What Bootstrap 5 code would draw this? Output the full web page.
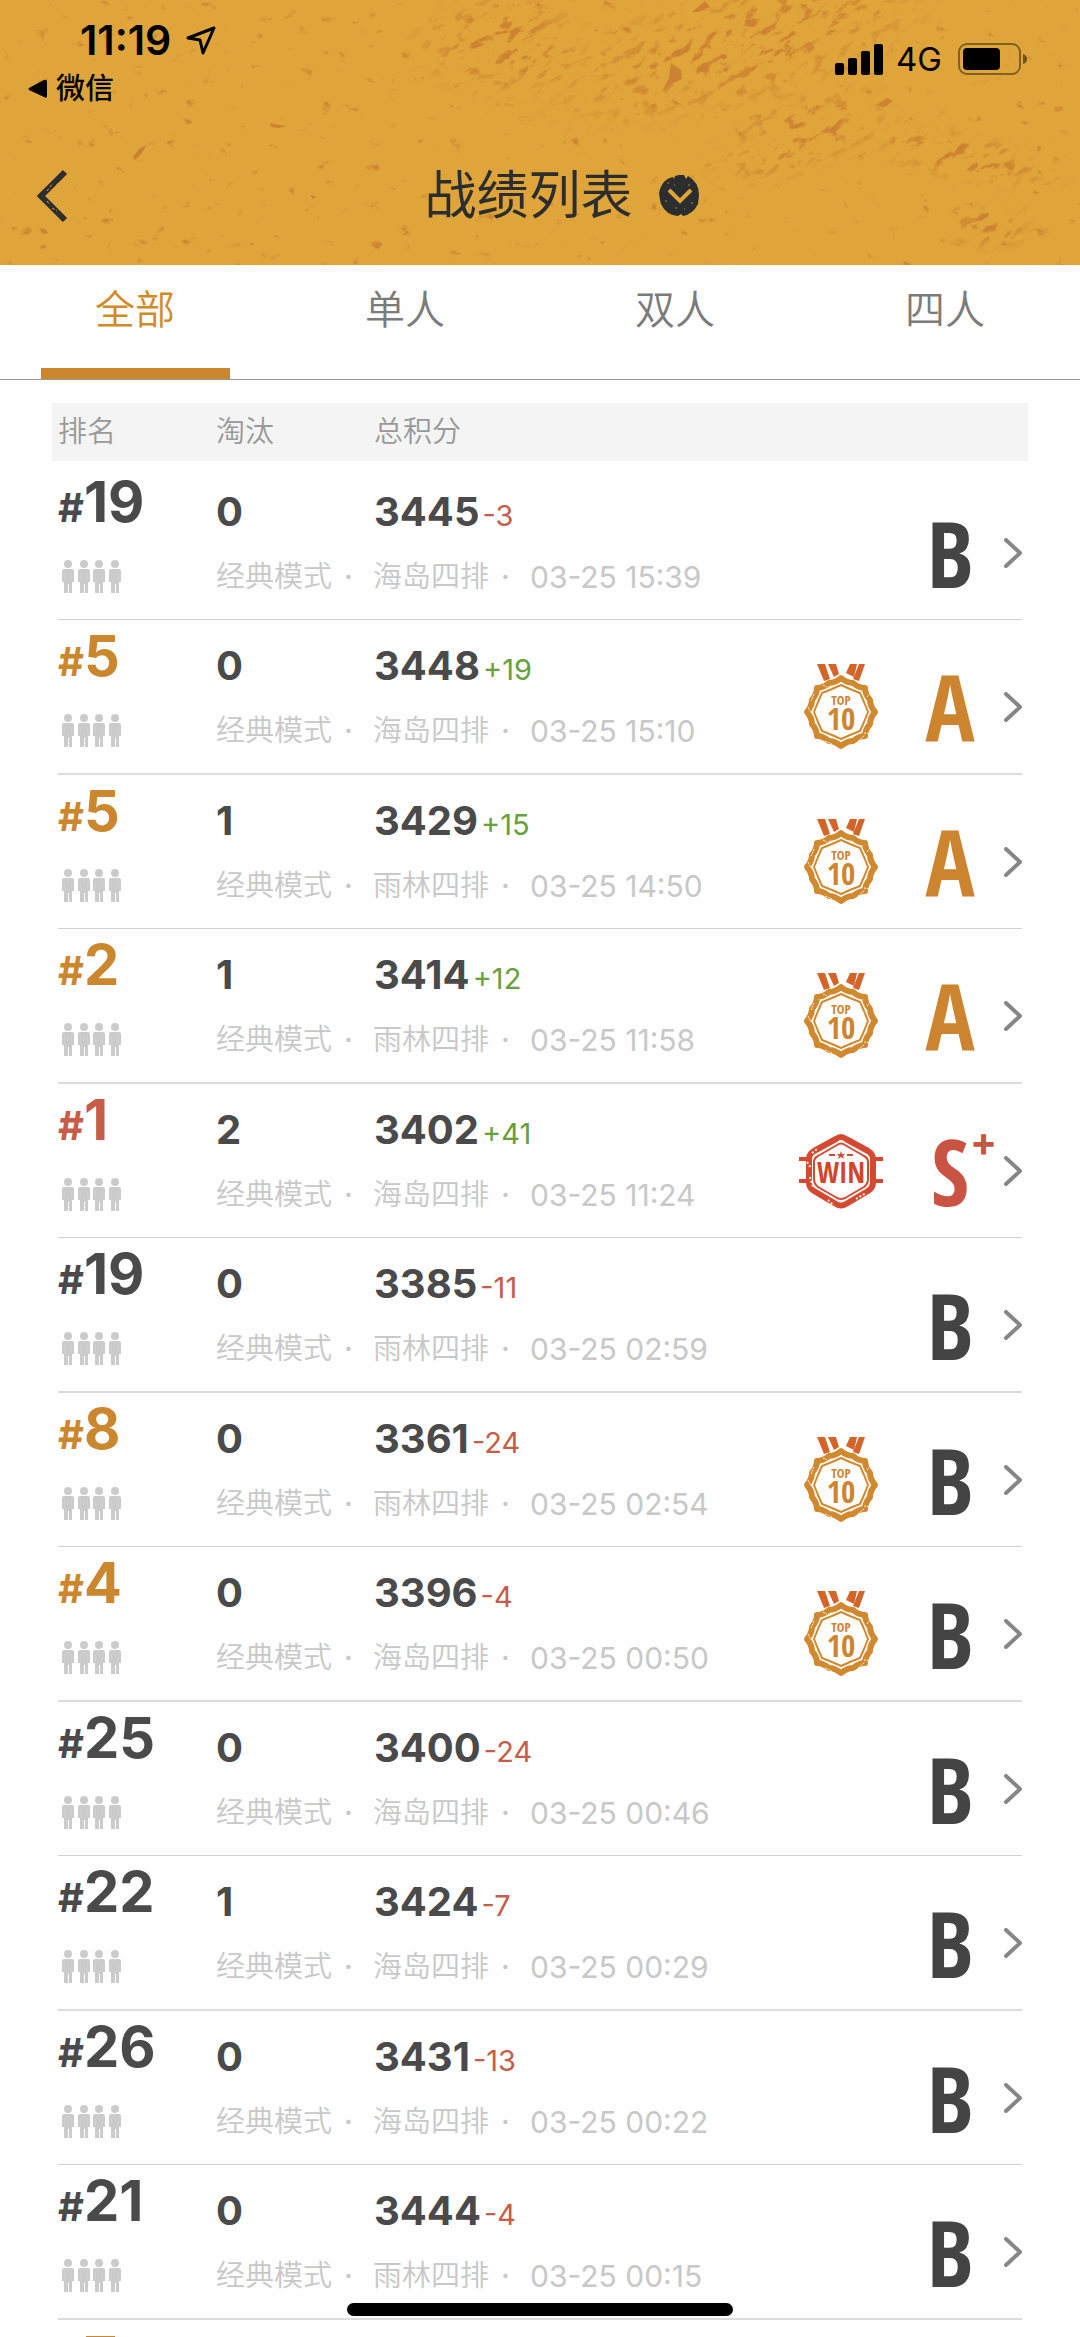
<!DOCTYPE html>
<html lang="zh-CN">
<head>
<meta charset="utf-8">
<meta name="viewport" content="width=device-width, initial-scale=1">
<title>战绩列表</title>
<link href="https://cdn.jsdelivr.net/npm/bootstrap@5.3.0/dist/css/bootstrap.min.css" rel="stylesheet">
<style>
  :root { --gold: #cb872d; --ink: #4a4a4a; --brick: #c65c49; --leaf: #67a03c; --faint: #c8c8c8; --stamp: "Noto Sans ExtraCondensed", "Open Sans Condensed", "Roboto Condensed", "Liberation Sans Narrow", sans-serif; }
  body { font-family: Inter, "Noto Sans CJK SC", sans-serif; color: var(--ink); background: #fefefe; }
  .phone { height: 100vh; }
  .masthead { background: #dfa53b; color: #000; height: 265px; }
  .texture { position: absolute; inset: 0; width: 100%; height: 100%; }
  .status { height: 112px; padding: 16px 52px 0 28px; }
  .clock { font-size: 41px; line-height: 48px; font-weight: 600; padding-left: 52px; }
  .back-app { font-size: 29px; line-height: 50px; font-weight: 500; color: #000; }
  .net { font-size: 33px; line-height: 40px; }
  .signals { padding-top: 23px; }
  .titlebar { height: 153px; padding: 14px 46px 0 0; color: #2b2d2e; }
  .back-btn { width: 92px; height: 92px; padding: 0 0 0 14px; }
  .page-title { font-size: 52px; line-height: 60px; font-weight: 400; }
  .tabs { height: 115px; border-bottom: 1px solid #999; }
  .tabs .nav-link { height: 114px; padding: 21px 0 0; font-size: 40px; line-height: 48px; font-weight: 350; color: #7b7b7b; position: relative; }
  .tabs .nav-link.active { color: #d18a25; }
  .tabs .nav-link.active::after { content: ""; position: absolute; left: 15%; right: 15%; bottom: 0; height: 11px; background: var(--gold); }
  .records { padding: 23px 58px 0; }
  .score-table { table-layout: fixed; border-collapse: separate; border-spacing: 0; color: inherit; }
  .score-table th, .score-table td { padding: 0; vertical-align: top; }
  .score-table th { background: #f4f4f4; height: 58px; font-size: 29px; line-height: 58px; font-weight: 350; color: #999; }
  .score-table th:first-child { box-shadow: -6px 0 #f4f4f4; }
  .score-table th:last-child { box-shadow: 6px 0 #f4f4f4; }
  .col-side { width: 158px; }
  .col-badges { width: 226px; }
  .score-table .top-line > td { height: 84px; }
  .score-table .sub-line > td { height: 70px; }
  .score-table tbody:nth-of-type(even) .sub-line > td { height: 71px; }
  .score-table tbody:nth-of-type(1) .top-line > td { border-top: 5px solid transparent; height: 89px; }
  .score-table .sub-line > td, .score-table .badge-cell { border-bottom: 1px solid #d2d2d2; }
  .score-table tbody:nth-of-type(even) .sub-line > td, .score-table tbody:nth-of-type(even) .badge-cell { border-bottom: 2px solid #dcdcdc; }
  .score-table .rank { padding-top: 4px; font-size: 56px; line-height: 64px; font-weight: 700; white-space: nowrap; }
  .rank .hash { font-size: 40px; }
  .rank.top10 { color: var(--gold); }
  .rank.first { color: var(--brick); }
  .score-table .figure-cell { padding-top: 22px; font-size: 40px; line-height: 48px; font-weight: 700; white-space: nowrap; }
  .delta { font-size: 29px; font-weight: 400; margin-left: 3px; }
  .delta.up { color: var(--leaf); }
  .delta.down { color: var(--brick); }
  .score-table .squad { padding: 10px 0 0 3px; }
  .score-table .meta { padding-top: 7px; font-size: 29px; line-height: 40px; font-weight: 350; color: var(--faint); white-space: nowrap; }
  .meta time { font-size: 30px; font-weight: 400; }
  .dot { width: 41px; padding-left: 12px; font-weight: 500; }
  .badge-row { height: 153px; padding-top: 20px; }
  .medal-slot { width: 86px; height: 88px; margin-right: 36px; }
  .grade { width: 60px; margin-right: 24px; text-align: center; position: relative; font-family: var(--stamp); font-weight: 800; font-size: 92px; line-height: 84px; color: #444; }
  .grade.a { color: #cc842f; }
  .grade.s { color: #c95443; }
  .grade .plus { position: absolute; left: 50px; top: -5px; font: 700 40px/36px Inter, sans-serif; }
  .stamp-text { font-family: var(--stamp); font-weight: 800; text-anchor: middle; }
  .home-bar { position: absolute; left: 50%; bottom: 21px; width: 386px; height: 13px; margin-left: -193px; border-radius: 7px; background: #000; }
</style>
</head>
<body>
<svg class="d-none" xmlns="http://www.w3.org/2000/svg">
  <symbol id="squad" viewBox="0 0 61 33">
    <g id="man" fill="#cbcbcb"><circle cx="7" cy="4" r="4"/><path d="M3 9H11Q13 9 13 11V22H11V13H10V33H8V23H6V33H4V13H3V22H1V11Q1 9 3 9Z"/><path d="M3 10H11V24H3Z" fill-opacity=".9"/><path d="M3 20H7V33H3ZM8 20H11V33H8Z"/></g>
    <use href="#man" x="16"/><use href="#man" x="31"/><use href="#man" x="47"/>
  </symbol>
  <symbol id="chev" viewBox="0 0 18 30"><path d="M2 2L16 15L2 28" fill="none" stroke="#868686" stroke-width="4" stroke-linecap="round" stroke-linejoin="round"/></symbol>
  <symbol id="top10" viewBox="0 0 86 88">
    <g fill="#d4652a"><path d="M19 1H27L32 16L26 18Z"/><path d="M30 1H38L41 11L36 14Z"/><path d="M48 10L52 1H59L56 14Z"/><path d="M61 1H67L61 18L55 16Z"/></g>
    <path d="M43 15Q49 20 55 20Q61 25 67 25Q67 31 72 37Q72 43 77 49Q72 55 72 61Q67 67 67 73Q61 73 55 78Q49 78 43 83Q37 78 31 78Q25 73 19 73Q19 67 14 61Q14 55 9 49Q14 43 14 37Q19 31 19 25Q25 25 31 20Q37 20 43 15Z" fill="none" stroke="#d1892f" stroke-width="6" stroke-linejoin="round"/>
    <path d="M43 22L52 26L62 30L66 39L70 49L66 59L62 68L52 72L43 76L34 72L24 68L20 59L16 49L20 39L24 30L34 26Z" fill="none" stroke="#d1892f" stroke-width="2" stroke-linejoin="round"/>
    <path d="M16 31L13 38M10 44L13 50M66 70L74 71M60 78L67 72M27 78L34 81M72 30L69 34M25 22L29 24" stroke="#fff3df" stroke-width="1" stroke-dasharray="2 1"/>
    <g fill="#cf8430" class="stamp-text"><text x="43" y="42" font-size="13">TOP</text><text x="43" y="67" font-size="31">10</text></g>
  </symbol>
  <symbol id="win" viewBox="0 0 86 88">
    <g fill="none" stroke="#d34a31" stroke-linejoin="round">
      <path d="M1 32H10M1 54H10M76 32H85M76 54H85" stroke-width="4"/>
      <path d="M38 12Q43 8 48 12L70 24Q75 27 75 32V55Q75 61 70 64L48 77Q43 80 38 77L16 64Q11 61 11 55V32Q11 27 16 24Z" stroke-width="6"/>
      <path d="M39 18Q43 15 47 18L66 29Q70 31 70 35V52Q70 57 66 60L47 71Q43 73 39 71L20 60Q16 57 16 52V35Q16 31 20 29Z" stroke-width="2"/>
      <path d="M31 28H37M49 28H55" stroke-width="2"/>
      <path d="M9 35L13 41M12 50L15 60M58 72L68 66M30 73L36 79M14 26L19 22" stroke="#fff0ec" stroke-width="2" stroke-dasharray="2 2"/>
    </g>
    <path d="M43 24L44 27H47L45 29L46 32L43 30L40 32L41 29L39 27H42Z" fill="#d34a31"/>
    <text x="43" y="56" font-size="28" fill="#d34527" class="stamp-text">WIN</text>
  </symbol>
</svg>

<div class="phone position-relative overflow-hidden d-flex flex-column">
  <header class="masthead position-relative flex-shrink-0">
    <svg class="texture" viewBox="0 0 1080 265" preserveAspectRatio="none" aria-hidden="true">
      <defs>
        <filter id="grit" x="0" y="0" width="100%" height="100%" color-interpolation-filters="sRGB"><feTurbulence type="fractalNoise" baseFrequency=".06 .12" numOctaves="5" seed="8"/><feColorMatrix values="0 0 0 0 .80  0 0 0 0 .51  0 0 0 0 .19  7 0 0 0 -3.9"/></filter>
        <filter id="dust" x="0" y="0" width="100%" height="100%" color-interpolation-filters="sRGB"><feTurbulence type="fractalNoise" baseFrequency=".06 .08" numOctaves="5" seed="21"/><feColorMatrix values="0 0 0 0 .80  0 0 0 0 .52  0 0 0 0 .19  6 0 0 0 -4.2"/></filter>
        <radialGradient id="fade"><stop offset=".3" stop-color="#fff"/><stop offset="1" stop-color="#fff" stop-opacity="0"/></radialGradient>
        <mask id="dense"><g fill="url(#fade)"><ellipse cx="740" cy="45" rx="230" ry="70" transform="rotate(-16 740 45)"/><ellipse cx="800" cy="135" rx="110" ry="45" transform="rotate(-20 800 135)"/><ellipse cx="960" cy="155" rx="120" ry="30" transform="rotate(12 960 155)"/><ellipse cx="500" cy="45" rx="100" ry="60"/><ellipse cx="990" cy="225" rx="50" ry="30"/></g></mask>
      </defs>
      <rect width="1080" height="265" filter="url(#dust)"/>
      <g mask="url(#dense)"><g transform="rotate(-30 740 100)"><rect x="300" y="-250" width="900" height="800" filter="url(#grit)"/></g></g>
      <g fill="#cc8232"><path d="M671 63L681 70L682 79L673 83L664 88L669 78Z"/><path d="M133 157L140 148L147 145L141 154L135 160Z"/><path d="M270 123L279 125L287 126L278 128L271 127Z"/><path d="M692 12L705 1L710 7L698 12Z"/><path d="M877 105L887 98L893 101L884 107Z"/><path d="M39 228L45 229L48 233L43 234Z"/><path d="M310 195L316 197L313 199Z"/></g>
    </svg>
    <div class="status position-relative d-flex justify-content-between">
      <div>
        <div class="clock d-flex align-items-center">11:19
          <svg class="ms-2 ps-1" width="40" height="32" viewBox="0 0 36 32" fill="none" stroke="#000" stroke-width="3" stroke-linejoin="round" aria-hidden="true"><path d="M5 14L31 4L20 29L17 16Z"/></svg>
        </div>
        <a href="#" class="back-app d-flex align-items-center text-decoration-none">
          <svg class="me-2" width="20" height="20" viewBox="0 0 20 20" aria-hidden="true"><path d="M1 9L16 1Q19 0 19 3V17Q19 20 16 18L1 11Q0 10 1 9Z"/></svg><span>微信</span>
        </a>
      </div>
      <div class="signals d-flex align-items-center align-self-start">
        <svg width="50" height="32" viewBox="0 0 50 32" aria-hidden="true"><rect x="1" y="20" width="9" height="12" rx="2"/><rect x="14" y="15" width="9" height="17" rx="2"/><rect x="27" y="8" width="9" height="24" rx="2"/><rect x="40" y="1" width="9" height="31" rx="2"/></svg>
        <span class="net ms-2 ps-1">4G</span>
        <svg class="ms-3" width="70" height="34" viewBox="0 0 70 34" aria-hidden="true"><rect x="1" y="2" width="61" height="30" rx="8" fill="none" stroke="#000" stroke-opacity=".42" stroke-width="2"/><rect x="5" y="6" width="37" height="22" rx="4"/><path d="M65 12Q69 13 69 17Q69 21 65 22Z" fill-opacity=".5"/></svg>
      </div>
    </div>
    <div class="titlebar position-relative d-flex align-items-center">
      <button type="button" class="back-btn btn border-0" aria-label="返回">
        <svg width="36" height="56" viewBox="0 0 36 56" aria-hidden="true"><path d="M30 4L6 28L30 52" fill="none" stroke="#2b2d2e" stroke-width="6"/><path d="M12 23L18 15M19 22L23 15M12 33L15 37M17 40L22 43" stroke="#dfa53b" stroke-width="1" stroke-dasharray="3 2"/></svg>
      </button>
      <div class="flex-fill d-flex justify-content-center align-items-center">
        <h1 class="page-title mb-0">战绩列表</h1>
        <button type="button" class="btn border-0 p-0 ms-4" aria-label="选择赛季">
          <svg class="d-block" width="45" height="45" viewBox="0 0 45 45" aria-hidden="true"><path d="M22 2L27 2L29 6L31 3Q42 9 42 22L41 31Q36 41 26 43L24 41L21 43Q9 42 4 31L3 27L2 20Q5 6 16 4L17 6L18 3Z" fill="#2b2d2e"/><path d="M12 17L23 28L34 17" fill="none" stroke="#dfa53b" stroke-width="4"/><path d="M10 10h2M17 12h1M31 12h2M8 28h2M18 35h2M34 30h2M27 36h1" stroke="#6b5730" stroke-width="2"/></svg>
        </button>
      </div>
    </div>
  </header>

  <nav class="tabs nav nav-fill flex-shrink-0 flex-nowrap" aria-label="模式">
    <a class="nav-link col active" href="#" aria-current="page">全部</a>
    <a class="nav-link col" href="#">单人</a>
    <a class="nav-link col" href="#">双人</a>
    <a class="nav-link col" href="#">四人</a>
  </nav>

  <main class="records">
    <table class="score-table w-100" id="records">
      <colgroup><col class="col-side"><col class="col-side"><col><col class="col-badges"></colgroup>
      <thead><tr><th scope="col">排名</th><th scope="col">淘汰</th><th scope="col">总积分</th><th aria-label="评级"></th></tr></thead>
    </table>
  </main>
  <div class="home-bar"></div>
</div>

<script src="https://cdn.jsdelivr.net/npm/bootstrap@5.3.0/dist/js/bootstrap.bundle.min.js"></script>
<script>
  // rank, kills, score, change, map, time, grade
  const games = [
    [19, 0, 3445, -3, '海岛', '03-25 15:39', 'B'],
    [5, 0, 3448, 19, '海岛', '03-25 15:10', 'A'],
    [5, 1, 3429, 15, '雨林', '03-25 14:50', 'A'],
    [2, 1, 3414, 12, '雨林', '03-25 11:58', 'A'],
    [1, 2, 3402, 41, '海岛', '03-25 11:24', 'S'],
    [19, 0, 3385, -11, '雨林', '03-25 02:59', 'B'],
    [8, 0, 3361, -24, '雨林', '03-25 02:54', 'B'],
    [4, 0, 3396, -4, '海岛', '03-25 00:50', 'B'],
    [25, 0, 3400, -24, '海岛', '03-25 00:46', 'B'],
    [22, 1, 3424, -7, '海岛', '03-25 00:29', 'B'],
    [26, 0, 3431, -13, '海岛', '03-25 00:22', 'B'],
    [21, 0, 3444, -4, '雨林', '03-25 00:15', 'B']
  ];
  const table = document.getElementById('records');
  for (const [rank, kills, score, change, map, time, grade] of games) {
    const tone = rank === 1 ? 'first' : rank <= 10 ? 'top10' : '';
    const medal = rank === 1 ? 'win' : rank <= 10 ? 'top10' : '';
    table.insertAdjacentHTML('beforeend', `<tbody>
      <tr class="top-line">
        <td class="rank ${tone}"><span class="hash">#</span>${rank}</td>
        <td class="figure-cell">${kills}</td>
        <td class="figure-cell">${score}<span class="delta ${change > 0 ? 'up' : 'down'}">${change > 0 ? '+' : ''}${change}</span></td>
        <td class="badge-cell" rowspan="2">
          <div class="badge-row d-flex justify-content-end align-items-center">
            <span class="medal-slot">${medal ? `<svg class="d-block" width="86" height="88"><use href="#${medal}"/></svg>` : ''}</span>
            <span class="grade ${grade.toLowerCase()}">${grade}${grade === 'S' ? '<span class="plus">+</span>' : ''}</span>
            <a href="#" class="d-flex" aria-label="查看详情"><svg width="18" height="30"><use href="#chev"/></svg></a>
          </div>
        </td>
      </tr>
      <tr class="sub-line">
        <td class="squad"><svg class="d-block" width="61" height="33" role="img" aria-label="四人"><use href="#squad"/></svg></td>
        <td class="meta" colspan="2"><div class="d-flex"><span>经典模式</span><span class="dot">·</span><span>${map}四排</span><span class="dot">·</span><time>${time}</time></div></td>
      </tr>
    </tbody>`);
  }
  // the next record only peeks in at the bottom of the screen
  table.insertAdjacentHTML('beforeend', '<tbody><tr><td style="padding-top:15px"><svg class="d-block" width="60" height="2" aria-hidden="true"><rect x="28" width="29" height="2" fill="#cb872d"/></svg></td></tr></tbody>'.replace(' style="padding-top:15px"', ' class="pt-3"'));
</script>
</body>
</html>
